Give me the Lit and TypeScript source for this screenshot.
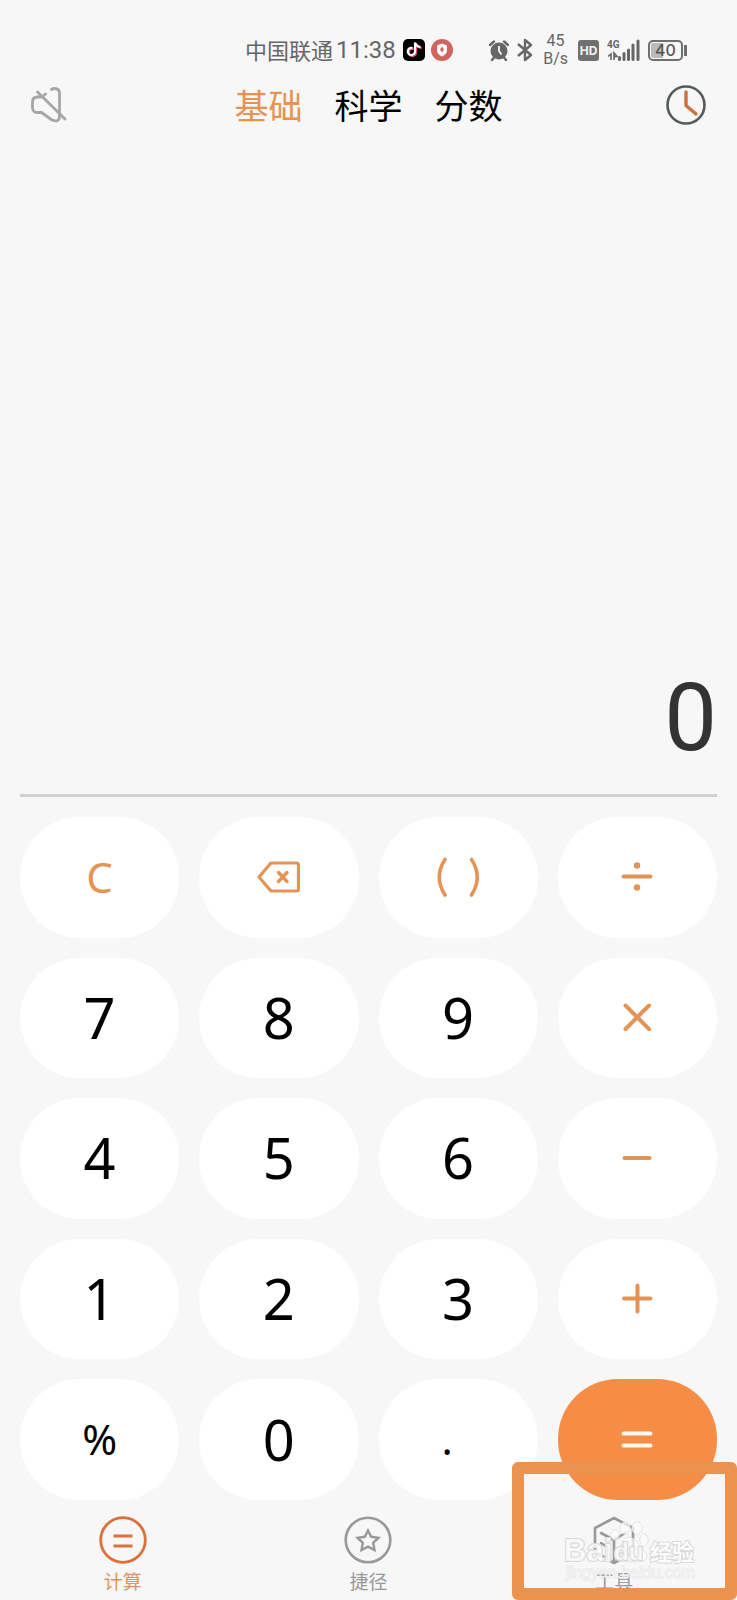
import { LitElement, html, css, svg } from "lit";
import { customElement, state } from "lit/decorators.js";

interface Key {
  id: string;
  label: string;
  text?: string;
  kind: string;
  art?: unknown;
}

const stroke = (d: string) => svg`<path d=${d} fill="none" stroke="currentColor" stroke-width="4" stroke-linecap="round" stroke-linejoin="round"></path>`;

const KEYS: Key[] = [
  { id: "c", label: "清除", text: "C", kind: "op" },
  {
    id: "del", label: "退格", kind: "op",
    art: svg`<path d="M4 24 15.500 10.500Q16 10 17 10H41.500Q43.500 10 43.500 12V36Q43.500 38 41.500 38H17Q16 38 15.500 37.500Z" fill="none" stroke="currentColor" stroke-width="3.200" stroke-linejoin="round"></path><path d="M23.500 19.500 32 28.500M32 19.500 23.500 28.500" stroke="currentColor" stroke-width="3.400" stroke-linecap="round"></path>`,
  },
  {
    id: "paren", label: "括号", kind: "op",
    art: svg`<path d="M11 6.500Q-.5 24 11 42M37.500 6.500Q49 24 37.500 42" fill="none" stroke="currentColor" stroke-width="3.600" stroke-linecap="round"></path>`,
  },
  {
    id: "div", label: "除", kind: "op",
    art: svg`${stroke("M10.500 23.500H37.500")}<circle cx="24" cy="12.500" r="3.200" fill="currentColor"></circle><circle cx="24" cy="34.500" r="3.200" fill="currentColor"></circle>`,
  },
  { id: "7", label: "7", text: "7", kind: "num" },
  { id: "8", label: "8", text: "8", kind: "num" },
  { id: "9", label: "9", text: "9", kind: "num" },
  { id: "mul", label: "乘", kind: "op", art: stroke("M12.500 11.500 36 35M36 11.500 12.500 35") },
  { id: "4", label: "4", text: "4", kind: "num" },
  { id: "5", label: "5", text: "5", kind: "num" },
  { id: "6", label: "6", text: "6", kind: "num" },
  { id: "sub", label: "减", kind: "op", art: stroke("M11.500 24H36.500") },
  { id: "1", label: "1", text: "1", kind: "num" },
  { id: "2", label: "2", text: "2", kind: "num" },
  { id: "3", label: "3", text: "3", kind: "num" },
  { id: "add", label: "加", kind: "op", art: stroke("M11 23.500H37.500M24.500 10.500V36.500") },
  { id: "pct", label: "百分号", text: "%", kind: "num small" },
  { id: "0", label: "0", text: "0", kind: "num" },
  { id: "dot", label: "小数点", text: ".  ", kind: "num small" },
  { id: "eq", label: "等于", kind: "eq", art: stroke("M10.500 17.500H37.500M10.500 29.500H37.500") },
];

@customElement("app-root")
export class AppRoot extends LitElement {
  static styles = css`
    :host {
      display: flex;
      flex-direction: column;
      min-height: 100vh;
      position: relative;
      overflow: hidden;
      background: #f7f7f7;
      color: #000;
      font-family: "Noto Sans CJK SC", sans-serif;
    }
    * { box-sizing: border-box; }
    svg { display: block; flex: none; }
    button { border: 0; padding: 0; background: none; color: inherit; font: inherit; cursor: pointer; }
    .status {
      display: flex;
      align-items: center;
      height: 76px;
      padding: 24px 50px 0 245px;
      color: #666;
      white-space: nowrap;
    }
    .carrier { font-size: 22px; line-height: 32px; padding-bottom: 2px; }
    .time { font-family: Roboto, sans-serif; font-size: 24px; line-height: 32px; margin-left: 3px; }
    .notices { display: flex; gap: 6px; margin-left: 7px; }
    .system { display: flex; align-items: center; gap: 8px; margin-left: auto; }
    .speed { font-family: Roboto, sans-serif; font-size: 16px; line-height: 18px; text-align: center; margin: 0 2px; }
    .hd { background: #707070; color: #f7f7f7; border-radius: 3px; font: 700 12px/21px Inter, sans-serif; width: 21px; text-align: center; }
    .battery { display: flex; align-items: center; gap: 1px; }
    .cell {
      width: 35px; height: 21px;
      border: 2px solid #707070; border-radius: 5px;
      background: linear-gradient(90deg, #bbb 40%, #f7f7f7 40%) content-box;
      padding: 1px;
      color: #555; font: 500 16px/15px Inter, sans-serif; text-align: center;
    }
    .nub { width: 3px; height: 11px; background: #707070; }
    .top {
      display: grid;
      grid-template-columns: 1fr auto 1fr;
      align-items: center;
      height: 58px;
      padding: 0 30px;
    }
    .sound { justify-self: start; }
    .tabs { display: flex; gap: 32px; }
    .tab { font-size: 34px; line-height: 50px; }
    .tab.on { color: #e9924f; }
    .history { justify-self: end; }
    .screen {
      display: flex;
      flex-direction: column;
      justify-content: flex-end;
      height: 663px;
      margin: 0 20px;
      padding-bottom: 20px;
      border-bottom: 3px solid #d0d0d0;
    }
    .value { font-family: Roboto, sans-serif; font-size: 94px; line-height: 112px; text-align: right; color: #333; }
    .keys {
      flex: 1;
      display: grid;
      grid-template-columns: repeat(4, 1fr);
      grid-auto-rows: 1fr;
      gap: 20px;
      padding: 20px 20px 0;
    }
    .key {
      display: flex;
      align-items: center;
      justify-content: center;
      border-radius: 60px;
      background: #fff;
      font-family: "Noto Sans", sans-serif;
      font-size: 56px;
      line-height: 64px;
      white-space: pre;
      min-height: 64px;
      padding-bottom: 2px;
    }
    .key.op { color: #e59355; font-size: 42px; padding-bottom: 0; }
    .key.small { font-size: 42px; }
    .key.eq { background: #f68d46; color: #fffaf0; padding-bottom: 0; }
    .nav { display: grid; grid-template-columns: repeat(3, 1fr); height: 100px; padding: 15px 0 0; }
    .link {
      display: flex;
      flex-direction: column;
      align-items: center;
      gap: 2px;
      color: #999;
      font-size: 19px;
      line-height: 28px;
      text-decoration: none;
    }
    .link.on { color: #e59355; }
    .frame {
      position: absolute;
      right: 0;
      bottom: 0;
      width: 225px;
      height: 138px;
      border: 12px solid #eb924f;
      border-radius: 6px;
    }
    .mark { position: absolute; right: 36px; bottom: 9px; }
  `;

  @state() private value = "0";

  private press(k: Key) {
    if (/^\d$/.test(k.id)) this.value = this.value === "0" ? k.id : this.value + k.id;
    else if (k.id === "c") this.value = "0";
    else if (k.id === "del") this.value = this.value.slice(0, -1) || "0";
    else if (k.id === "dot" && !this.value.includes(".")) this.value += ".";
  }

  render() {
    return html`
      <header>
        <div class="status">
          <span class="carrier">中国联通</span>
          <span class="time">11:38</span>
          <span class="notices">
            <svg width="22" height="22" viewBox="0 0 22 22">
              <rect width="22" height="22" rx="5" fill="#000"></rect>
              <g fill="none" stroke-width="2.200">
                <path d="M10 9.500A3.600 3.600 0 1 0 12.500 13V4Q13.500 8 18 8.500" stroke="#e8446a" transform="translate(.6 .6)"></path>
                <path d="M9.500 9A3.600 3.600 0 1 0 12 12.500V3.500Q13 7.500 17.500 8" stroke="#fff"></path>
              </g>
            </svg>
            <svg width="22" height="22" viewBox="0 0 22 22">
              <circle cx="11" cy="11" r="11" fill="#d2645f"></circle>
              <path d="M11 4.500 16 6.500V11Q16 15 11 17.500Q6 15 6 11V6.500Z" fill="#fff"></path>
              <path d="M11 7.500 13 10.500 11 13.500 9 10.500Z" fill="#d2645f"></path>
            </svg>
          </span>
          <span class="system">
            <svg width="20" height="21" viewBox="0 0 20 21">
              <circle cx="10" cy="11" r="8.500" fill="#666"></circle>
              <path d="M1 5 5 1.500M19 5 15 1.500M5 17.500 3 20M15 17.500 17 20" stroke="#666" stroke-width="2.400" stroke-linecap="round"></path>
              <path d="M10 6V11L12.500 14.500" fill="none" stroke="#f7f7f7" stroke-width="1.800"></path>
            </svg>
            <svg width="16" height="24" viewBox="0 0 16 24">
              <path d="M1 6 14 17 8 22V2L14 7 1 18" fill="none" stroke="#666" stroke-width="2.400" stroke-linejoin="round"></path>
            </svg>
            <span class="speed">45<br />B/s</span>
            <span class="hd">HD</span>
            <svg width="33" height="22" viewBox="0 0 33 22">
              <text x="0" y="9" font-family="Roboto, sans-serif" font-size="10" font-weight="700" fill="#666">4G</text>
              <path d="M1 17.500 4 15V21M7 21V14L10 17.500 7 18" fill="none" stroke="#666" stroke-width="1.600"></path>
              <path d="M12.500 20.500V18.500M17 20.500V14.500M21.500 20.500V11M26 20.500V6M31 20.500V2" stroke="#666" stroke-width="3" stroke-linecap="round"></path>
            </svg>
            <span class="battery"><span class="cell">40</span><span class="nub"></span></span>
          </span>
        </div>
        <div class="top">
          <button class="sound" aria-label="静音">
            <svg width="38" height="40" viewBox="0 0 38 40" fill="none" stroke="#a6a6a6" stroke-width="2.800" stroke-linecap="round" stroke-linejoin="round">
              <path d="M21.500 4.500Q23 3.500 24.500 3.500Q29.500 3.500 29.500 8.500V31Q29.500 38 22 35L11.500 27.500H7.500Q2.500 27.500 2.500 22.500V17Q2.500 12 7.500 12H12L15.500 9"></path>
              <path d="M7.500 7 35 34"></path>
            </svg>
          </button>
          <nav class="tabs">
            <button class="tab on">基础</button>
            <button class="tab">科学</button>
            <button class="tab">分数</button>
          </nav>
          <button class="history" aria-label="历史">
            <svg width="42" height="42" viewBox="0 0 42 42" fill="none">
              <circle cx="21" cy="21" r="18.500" stroke="#555a5c" stroke-width="2.600"></circle>
              <path d="M21 8V21.500L31 30" stroke="#d0703a" stroke-width="3.400" stroke-linecap="round" stroke-linejoin="round"></path>
            </svg>
          </button>
        </div>
      </header>
      <section class="screen"><output class="value">${this.value}</output></section>
      <section class="keys">
        ${KEYS.map(
          (k) => html`<button class="key ${k.kind}" aria-label=${k.label} @click=${() => this.press(k)}>${k.text ??
            html`<svg width="48" height="48" viewBox="0 0 48 48">${k.art}</svg>`}</button>`
        )}
      </section>
      <nav class="nav">
        <a class="link on" href="#calc">
          <svg width="50" height="50" viewBox="0 0 50 50" fill="none" stroke="#dc713b">
            <circle cx="25" cy="25" r="22.300" stroke-width="2.800"></circle>
            <path d="M15.500 21H34.500M15.500 31H34.500" stroke-width="3.200"></path>
          </svg>
          计算
        </a>
        <a class="link" href="#shortcut">
          <svg width="50" height="50" viewBox="0 0 50 50" fill="none" stroke="#999">
            <circle cx="25" cy="25" r="22.300" stroke-width="2.600"></circle>
            <path d="M25 15.500 28.200 21.800 35.500 22.800 30.200 27.800 31.500 35 25 31.600 18.500 35 19.800 27.800 14.500 22.800 21.800 21.800Z" stroke-width="2.400"></path>
          </svg>
          捷径
        </a>
        <a class="link" href="#tools">
          <svg width="50" height="50" viewBox="0 0 50 50" fill="none" stroke="#999" stroke-width="2.600" stroke-linejoin="round" stroke-linecap="round">
            <path d="M25 3 44 13V37L25 48 6 37V13Z"></path>
            <path d="M12 18 25 25 36 18M25 26V46M12 28 18 32V42M32 32 38 28V35L31 39"></path>
          </svg>
          工具
        </a>
      </nav>
      <div class="frame"></div>
      <svg class="mark" width="137" height="74" viewBox="0 0 137 74" fill="#fcfcfc" stroke="#d8d8d8" stroke-width="1" paint-order="stroke" aria-hidden="true">
        <g fill-opacity=".7">
          <ellipse cx="51" cy="18" rx="4" ry="5"></ellipse>
          <ellipse cx="61" cy="11" rx="5" ry="6"></ellipse>
          <ellipse cx="73" cy="11" rx="5" ry="6"></ellipse>
          <ellipse cx="80" cy="23" rx="4" ry="6"></ellipse>
          <path d="M65 20Q71 21 76 29Q85 37 82 42Q78 46 66 44Q54 46 51 41Q48 36 57 29Q60 21 65 20Z"></path>
        </g>
        <g font-weight="700" stroke-width="2">
          <text x="0" y="44" font-family="Liberation Sans, sans-serif" font-size="31" fill-opacity=".8">Bai</text>
          <text x="50" y="43" font-family="Liberation Sans, sans-serif" font-size="24" fill-opacity=".8">du</text>
          <text x="86" y="43" font-family="Noto Sans CJK SC, sans-serif" font-size="22">经验</text>
        </g>
        <text x="2" y="61" font-family="Liberation Sans, sans-serif" font-size="16" stroke="#e0e0e0" fill-opacity=".6" stroke-opacity=".8">jingyan.baidu.com</text>
      </svg>
    `;
  }
}
